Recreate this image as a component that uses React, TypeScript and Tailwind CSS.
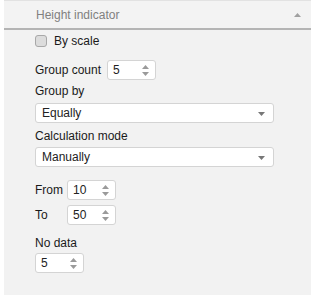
import React from 'react';

function Spinner() {
  return (
    <div className="absolute right-[6px] top-[4px] flex flex-col gap-[3px]">
      <svg width="7" height="4" viewBox="0 0 7 4"><path d="M3.5 0L7 4H0z" fill="#9a9a9a" /></svg>
      <svg width="7" height="4" viewBox="0 0 7 4"><path d="M0 0h7L3.5 4z" fill="#9a9a9a" /></svg>
    </div>
  );
}

function NumberBox({ value }: { value: string }) {
  return (
    <div className="relative w-[49px] h-[20px] bg-white border border-[#d4d4d4] rounded-[3px] flex items-center pl-[5px] text-[12px] text-[#222]">
      {value}
      <Spinner />
    </div>
  );
}

function Select({ value }: { value: string }) {
  return (
    <div className="relative w-[239px] h-[20px] bg-white border border-[#d4d4d4] rounded-[3px] flex items-center pl-[6px] text-[12px] text-[#222]">
      {value}
      <svg className="absolute right-[8px] top-[8px]" width="7" height="4" viewBox="0 0 7 4">
        <path d="M0 0h7L3.5 4z" fill="#777" />
      </svg>
    </div>
  );
}

export default function App() {
  return (
    <div
      className="w-[311px] h-[295px] bg-white pl-[4px] flex flex-col"
      style={{ fontFamily: '"Liberation Sans", Arial, sans-serif' }}
    >
      <div className="h-[30px] shrink-0 bg-[#f3f3f3] border-t border-[#e2e2e2] border-b-2 border-b-[#b4b4b4] flex items-center pl-[32px] pr-[10px]">
        <span className="text-[12px] text-[#808080] flex-1">Height indicator</span>
        <svg width="7" height="4" viewBox="0 0 7 4"><path d="M3.5 0L7 4H0z" fill="#a0a0a0" /></svg>
      </div>
      <div className="flex-1 bg-[#f2f2f2] pl-[31px] text-[12px] text-[#1a1a1a]">
        <div className="flex items-center gap-[7px] mt-[4px] h-[13px]">
          <div className="w-[12px] h-[12px] rounded-[3px] border border-[#a8a8a8] bg-[#dcdcdc]" />
          <span>By scale</span>
        </div>
        <div className="flex items-center gap-[6px] mt-[13px]">
          <span>Group count</span>
          <NumberBox value="5" />
        </div>
        <div className="mt-[2px] h-[18px] flex items-center">Group by</div>
        <div className="mt-[3px]"><Select value="Equally" /></div>
        <div className="mt-[4px] h-[18px] flex items-center">Calculation mode</div>
        <div className="mt-[2px]"><Select value="Manually" /></div>
        <div className="flex items-center mt-[13px]">
          <span className="w-[32px]">From</span>
          <NumberBox value="10" />
        </div>
        <div className="flex items-center mt-[5px]">
          <span className="w-[32px]">To</span>
          <NumberBox value="50" />
        </div>
        <div className="mt-[9px] h-[18px] flex items-center">No data</div>
        <div className="mt-[1px]"><NumberBox value="5" /></div>
      </div>
    </div>
  );
}
